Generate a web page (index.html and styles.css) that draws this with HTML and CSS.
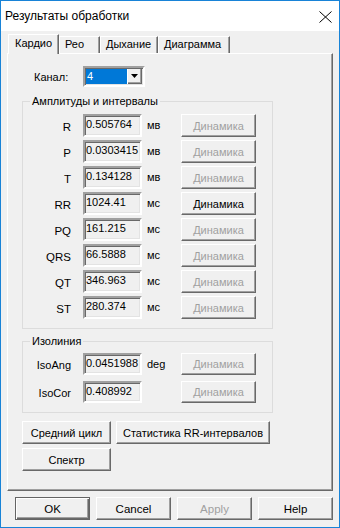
FILE: index.html
```html
<html>
    <head>
        <meta charset="utf-8">
        <link rel="stylesheet" href="styles.css">
    </head>
    <body>
        <div class="window">
            <div class="titleBar">
                <span>Результаты обработки</span>
                <svg class="closeIcon" width="13" height="12" viewBox="0 0 13 12">
                    <path d="M0.5 0.5 L12.5 11.5 M12.5 0.5 L0.5 11.5" stroke="#000" stroke-width="1" fill="none"/>
                </svg>
            </div>

            <div class="dialogBody">
                <div class="tabs">
                    <div class="tab active">Кардио</div>
                    <div class="tab tabReo">Рео</div>
                    <div class="tab tabBreath">Дыхание</div>
                    <div class="tab tabDiagram">Диаграмма</div>
                </div>

                <div class="panel">
                    <div class="channelRow">
                        <label class="channelLabel">Канал:</label>
                        <div class="combo">
                            <div class="comboValue">4</div>
                            <div class="comboArrow">
                                <svg width="7" height="4" viewBox="0 0 7 4"><polygon points="0,0 7,0 3.5,4" fill="#000"/></svg>
                            </div>
                        </div>
                    </div>

                    <div class="group groupMain">
                        <div class="groupTitle">Амплитуды и интервалы</div>
                        <div class="rows">
                            <span class="rowLabel">R</span><div class="edit">0.505764</div><span class="unit">мв</span><button class="btn" disabled>Динамика</button>
                            <span class="rowLabel">P</span><div class="edit">0.0303415</div><span class="unit">мв</span><button class="btn" disabled>Динамика</button>
                            <span class="rowLabel">T</span><div class="edit">0.134128</div><span class="unit">мв</span><button class="btn" disabled>Динамика</button>
                            <span class="rowLabel">RR</span><div class="edit">1024.41</div><span class="unit">мс</span><button class="btn">Динамика</button>
                            <span class="rowLabel">PQ</span><div class="edit">161.215</div><span class="unit">мс</span><button class="btn" disabled>Динамика</button>
                            <span class="rowLabel">QRS</span><div class="edit">66.5888</div><span class="unit">мс</span><button class="btn" disabled>Динамика</button>
                            <span class="rowLabel">QT</span><div class="edit">346.963</div><span class="unit">мс</span><button class="btn" disabled>Динамика</button>
                            <span class="rowLabel">ST</span><div class="edit">280.374</div><span class="unit">мс</span><button class="btn" disabled>Динамика</button>
                        </div>
                    </div>

                    <div class="group groupIso">
                        <div class="groupTitle">Изолиния</div>
                        <div class="rows isoRows">
                            <span class="rowLabel">IsoAng</span><div class="edit">0.0451988</div><span class="unit">deg</span><button class="btn" disabled>Динамика</button>
                            <span class="rowLabel">IsoCor</span><div class="edit">0.408992</div><span class="unit"></span><button class="btn" disabled>Динамика</button>
                        </div>
                    </div>

                    <div class="actions">
                        <button class="btn">Средний цикл</button>
                        <button class="btn">Статистика RR-интервалов</button>
                        <button class="btn">Спектр</button>
                    </div>
                </div>

                <div class="footer">
                    <button class="btn btnDefault">OK</button>
                    <button class="btn">Cancel</button>
                    <button class="btn" disabled>Apply</button>
                    <button class="btn">Help</button>
                </div>
            </div>
        </div>
    </body>
</html>
```

FILE: styles.css
```css
body {
    margin: 0;
    font-family: "Liberation Sans", Arial, sans-serif;
    font-size: 11px;
    color: #000;
}
.window {
    width: 340px;
    height: 528px;
    box-sizing: border-box;
    border: 1px solid #1883d7;
    background: #f0f0f0;
}

/* title bar */
.titleBar {
    height: 30px;
    background: #fff;
    display: flex;
    align-items: center;
    justify-content: space-between;
    padding: 0 7px 0 4px;
    font-size: 12px;
}
.closeIcon {
    display: block;
    margin-top: 1px;
}

/* tabs */
.dialogBody {
    padding-top: 3px;
}
.tabs {
    display: flex;
    align-items: flex-end;
    height: 19px;
    margin-left: 7px;
}
.tab {
    height: 17px;
    box-sizing: border-box;
    padding: 1px 0 0 5px;
    line-height: 13px;
    border-top: 1px solid #fff;
    border-left: 1px solid #fff;
    border-right: 1px solid #696969;
    box-shadow: inset -1px 0 #a0a0a0;
    background: #f0f0f0;
}
.tab.active {
    width: 51px;
    height: 20px;
    margin-bottom: -1px;
    padding: 2px 0 0 6px;
    position: relative;
    z-index: 1;
}
.tabReo {
    width: 41px;
}
.tabBreath {
    width: 58px;
}
.tabDiagram {
    width: 72px;
}

/* panel */
.panel {
    margin-left: 6px;
    width: 326px;
    height: 438px;
    box-sizing: border-box;
    padding-left: 14px;
    border-top: 1px solid #fff;
    border-left: 1px solid #fff;
    border-right: 1px solid #696969;
    border-bottom: 1px solid #696969;
    box-shadow: inset -1px -1px #a0a0a0;
}
.channelRow {
    display: flex;
    align-items: center;
    margin-top: 12px;
}
.channelLabel {
    width: 49px;
    padding-left: 12px;
    padding-top: 1px;
}
.combo {
    display: flex;
    width: 62px;
    height: 21px;
    box-sizing: border-box;
    padding: 1px;
    border: 2px solid;
    border-color: #a0a0a0 #fff #fff #a0a0a0;
    box-shadow: inset 1px 1px #696969, inset -1px -1px #e3e3e3;
    background: #fff;
}
.comboValue {
    width: 41px;
    background: #0078d7;
    color: #fff;
    line-height: 15px;
    padding-left: 1px;
    box-sizing: border-box;
}
.comboArrow {
    width: 14px;
    margin-left: 1px;
    box-sizing: border-box;
    display: flex;
    align-items: center;
    justify-content: center;
    background: #f0f0f0;
    border-right: 1px solid #696969;
    border-bottom: 1px solid #696969;
    box-shadow: inset -1px -1px #a0a0a0;
}

/* groups */
.group {
    width: 251px;
    box-sizing: border-box;
    border: 1px solid #dcdcdc;
}
.groupMain {
    margin-top: 14px;
    padding-bottom: 9px;
}
.groupIso {
    margin-top: 12px;
    padding-bottom: 9px;
}
.groupTitle {
    width: max-content;
    margin: -7px 0 0 7px;
    padding: 0 2px;
    line-height: 13px;
    background: #f0f0f0;
}
.rows {
    display: grid;
    grid-template-columns: 60px 59px 39px 75px;
    grid-auto-rows: 23px;
    row-gap: 3px;
    align-items: center;
    margin-top: 6px;
}
.isoRows {
    grid-auto-rows: 22px;
    row-gap: 6px;
    margin-top: 5px;
}
.rowLabel {
    text-align: right;
    padding-right: 12px;
    padding-top: 3px;
    font-size: 11.5px;
}
.isoRows .rowLabel {
    font-size: 11px;
    padding-top: 2px;
}
.unit {
    padding-left: 5px;
    padding-bottom: 1px;
}
.edit {
    height: 100%;
    box-sizing: border-box;
    padding: 2px 0 0 1px;
    line-height: 13px;
    border: 2px solid;
    border-color: #a0a0a0 #fff #fff #a0a0a0;
    box-shadow: inset 1px 1px #696969, inset -1px -1px #e3e3e3;
    background: #f0f0f0;
    white-space: nowrap;
    overflow: hidden;
}

/* buttons */
.btn {
    height: 23px;
    margin: 0;
    padding: 0;
    box-sizing: border-box;
    font-family: inherit;
    font-size: 11px;
    color: #000;
    background: #f0f0f0;
    border: 1px solid;
    border-color: #fff #696969 #696969 #fff;
    box-shadow: inset -1px -1px #a0a0a0;
    white-space: nowrap;
}
.btn:disabled {
    color: #a0a0a0;
}
.rows .btn {
    height: 100%;
}
.actions {
    display: grid;
    grid-template-columns: 89px 154px;
    grid-auto-rows: 23px;
    gap: 4px 5px;
    margin-top: 8px;
}

/* dialog buttons */
.footer {
    display: flex;
    gap: 6px;
    margin-top: 6px;
    padding-left: 14px;
}
.footer .btn {
    width: 75px;
    font-size: 11.5px;
}
.btnDefault {
    border-color: #646464;
    box-shadow: inset 1px 1px #fff, inset -1px -1px #696969, inset -2px -2px #a0a0a0;
}
```
